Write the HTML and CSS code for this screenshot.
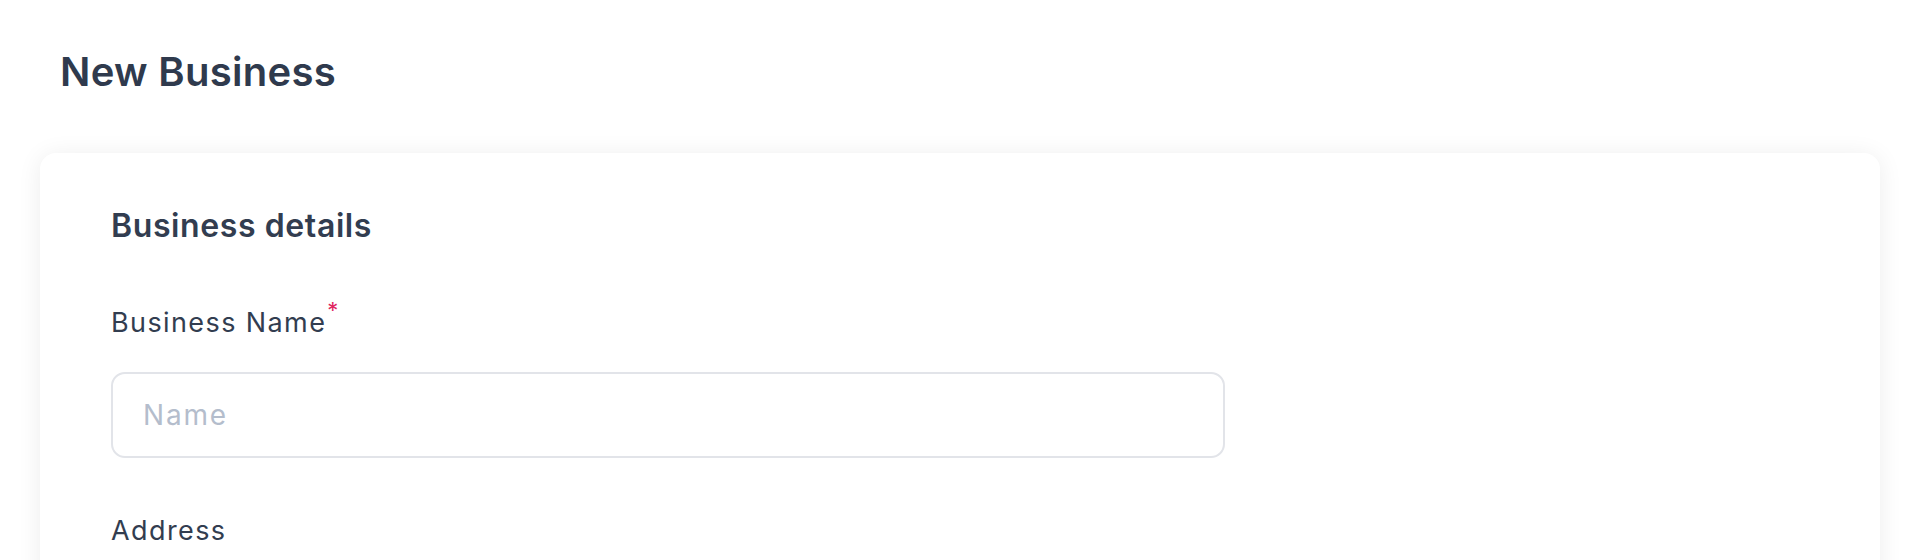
FILE: index.html
```html
<!DOCTYPE html>
<html lang="en">
<head>
<meta charset="utf-8">
<title>New Business</title>
<link rel="stylesheet" href="styles.css">
</head>
<body>
<main class="page">
  <h1 class="page-title">New Business</h1>
  <section class="card">
    <h2 class="section-title">Business details</h2>
    <div class="field">
      <label class="field-label" for="bname">Business Name<span class="req">*</span></label>
      <input class="text-input" id="bname" type="text" placeholder="Name">
    </div>
    <div class="field">
      <label class="field-label" for="addr">Address</label>
    </div>
  </section>
</main>
</body>
</html>
```
FILE: styles.css
```css
* { box-sizing: border-box; }
html, body { margin: 0; padding: 0; }
body {
  background: #ffffff;
  font-family: "Inter", "Open Sans", sans-serif;
  color: #323d50;
  overflow: hidden;
}
.page {
  padding: 45px 40px 0 40px;
}
.page-title {
  margin: 0 0 54px 20px;
  font-size: 40px;
  line-height: 54px;
  font-weight: 600;
  letter-spacing: 0.3px;
  color: #2f3a4d;
}
.card {
  background: #ffffff;
  border-radius: 16px;
  box-shadow: 0 2px 24px rgba(0, 0, 0, 0.075);
  padding: 53px 71px 80px 71px;
  min-height: 500px;
}
.section-title {
  margin: 0;
  font-size: 32px;
  line-height: 40px;
  font-weight: 600;
  letter-spacing: 0.6px;
  color: #323d50;
}
.field {
  display: flex;
  flex-direction: column;
  align-items: flex-start;
}
.field + .field { margin-top: 57px; }
.section-title + .field { margin-top: 61px; }
.field-label {
  font-size: 27px;
  line-height: 32px;
  font-weight: 400;
  letter-spacing: 1.4px;
  color: #323d50;
}
.req {
  color: #e0245e;
  font-size: 22px;
  vertical-align: 14px;
  line-height: 0;
  margin-left: 1px;
  letter-spacing: 0;
}
.text-input {
  margin-top: 33px;
  width: 1114px;
  height: 86px;
  border: 2px solid #e2e4e9;
  border-radius: 14px;
  padding: 0 30px;
  font-family: inherit;
  font-size: 28px;
  letter-spacing: 1.8px;
  color: #323d50;
  background: #ffffff;
  outline: none;
}
.text-input::placeholder { color: #b4bdcc; }
```
